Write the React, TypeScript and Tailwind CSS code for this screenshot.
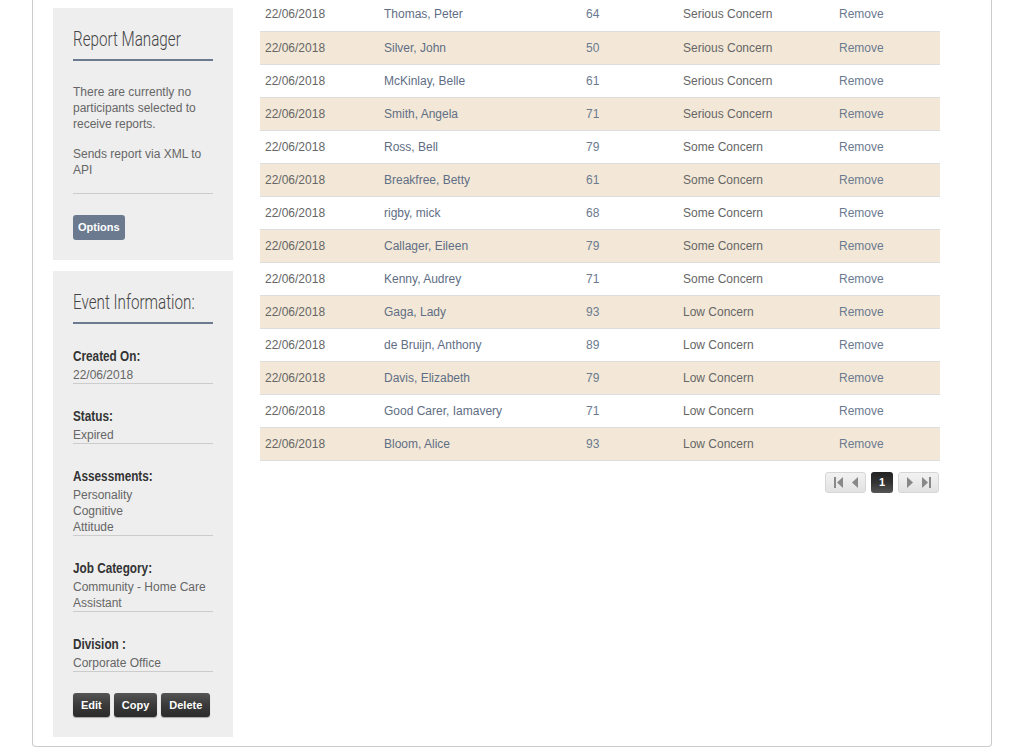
import React from 'react';

const rows = [
  { name: 'Thomas, Peter', score: 64, concern: 'Serious Concern' },
  { name: 'Silver, John', score: 50, concern: 'Serious Concern' },
  { name: 'McKinlay, Belle', score: 61, concern: 'Serious Concern' },
  { name: 'Smith, Angela', score: 71, concern: 'Serious Concern' },
  { name: 'Ross, Bell', score: 79, concern: 'Some Concern' },
  { name: 'Breakfree, Betty', score: 61, concern: 'Some Concern' },
  { name: 'rigby, mick', score: 68, concern: 'Some Concern' },
  { name: 'Callager, Eileen', score: 79, concern: 'Some Concern' },
  { name: 'Kenny, Audrey', score: 71, concern: 'Some Concern' },
  { name: 'Gaga, Lady', score: 93, concern: 'Low Concern' },
  { name: 'de Bruijn, Anthony', score: 89, concern: 'Low Concern' },
  { name: 'Davis, Elizabeth', score: 79, concern: 'Low Concern' },
  { name: 'Good Carer, Iamavery', score: 71, concern: 'Low Concern' },
  { name: 'Bloom, Alice', score: 93, concern: 'Low Concern' },
];

function PanelTitle({ children }: { children: React.ReactNode }) {
  return (
    <h2 className="h-[24px] whitespace-nowrap">
      <span className="inline-block origin-left scale-x-[0.76] font-['Roboto',sans-serif] font-light text-[20px] leading-[24px] text-[#444]">
        {children}
      </span>
    </h2>
  );
}

function InfoItem({ label, values }: { label: string; values: string[] }) {
  return (
    <div className="mt-[20px]">
      <div className="h-[18px] whitespace-nowrap">
        <span className="inline-block origin-left scale-x-[0.84] font-bold text-[14px] leading-[18px] text-[#333]">{label}</span>
      </div>
      <div className="border-b border-[#cccccc] mt-[5px]">
        {values.map((v) => (
          <div key={v} className="text-[12px] leading-[16px] text-[#666]">{v}</div>
        ))}
      </div>
    </div>
  );
}

function DarkButton({ children }: { children: React.ReactNode }) {
  return (
    <button className="h-[24px] px-[8px] rounded-[3px] bg-gradient-to-b from-[#555] via-[#3a3a3a] to-[#2a2a2a] text-white font-bold text-[11px] shadow-[0_1px_1px_rgba(0,0,0,0.3)]">
      {children}
    </button>
  );
}

export default function App() {
  return (
    <div className="w-[1036px] h-[755px] overflow-hidden bg-white font-['Liberation_Sans',Arial,sans-serif]">
      <div className="ml-[32px] w-[960px] border-x border-b border-[#cccccc] rounded-b-[4px] flex pl-[20px] pr-[51px] pb-[9px] pt-[8px]">
        {/* Sidebar */}
        <div className="w-[180px] shrink-0">
          <div className="bg-[#eeeeee] px-[20px] pt-[19px] h-[252px]">
            <PanelTitle>Report Manager</PanelTitle>
            <div className="h-[2px] bg-[#6b7a8f] mt-[8px]" />
            <p className="mt-[23px] text-[12px] leading-[16px] text-[#666]">
              There are currently no participants selected to receive reports.
            </p>
            <p className="mt-[14px] text-[12px] leading-[16px] text-[#666]">Sends report via XML to API</p>
            <div className="h-px bg-[#cccccc] mt-[15px]" />
            <button className="mt-[21px] h-[25px] px-[5px] rounded-[3px] bg-[#6b7a8f] text-white font-bold text-[11px]">
              Options
            </button>
          </div>
          <div className="bg-[#eeeeee] px-[20px] pt-[19px] mt-[11px] h-[466px]">
            <PanelTitle>Event Information:</PanelTitle>
            <div className="h-[2px] bg-[#6b7a8f] mt-[8px]" />
            <div className="mt-[2px]">
              <InfoItem label="Created On:" values={['22/06/2018']} />
              <InfoItem label="Status:" values={['Expired']} />
              <InfoItem label="Assessments:" values={['Personality', 'Cognitive', 'Attitude']} />
              <InfoItem label="Job Category:" values={['Community - Home Care', 'Assistant']} />
              <InfoItem label="Division :" values={['Corporate Office']} />
            </div>
            <div className="flex gap-[4px] mt-[21px]">
              <DarkButton>Edit</DarkButton>
              <DarkButton>Copy</DarkButton>
              <DarkButton>Delete</DarkButton>
            </div>
          </div>
        </div>

        {/* Table */}
        <div className="ml-[27px] flex-1 -mt-[10px]">
          <table className="w-full border-collapse text-[12px]">
            <tbody>
              {rows.map((r, i) => (
                <tr key={r.name} className={`h-[33px] border-b border-[#dddddd] ${i % 2 === 1 ? 'bg-[#f3e8d7]' : 'bg-white'}`}>
                  <td className="pl-[5px] w-[124px] text-[#666]">22/06/2018</td>
                  <td className="w-[202px] text-[#5f6e85]">{r.name}</td>
                  <td className="w-[97px] text-[#6b7a8f]">{r.score}</td>
                  <td className="w-[156px] text-[#666]">{r.concern}</td>
                  <td className="text-[#6b7a8f]">Remove</td>
                </tr>
              ))}
            </tbody>
          </table>
          <div className="flex justify-end gap-[5px] mt-[11px] mr-[1px]">
            <div className="w-[41px] flex items-center justify-center gap-[7px] h-[21px] rounded-[3px] border border-[#d6d6d6] bg-gradient-to-b from-[#f2f2f2] to-[#e2e2e2]">
              <svg width="10" height="11" viewBox="0 0 10 11"><rect x="0" y="0" width="2" height="11" fill="#888" /><path d="M9 0 L3 5.5 L9 11 Z" fill="#888" /></svg>
              <svg width="7" height="11" viewBox="0 0 7 11"><path d="M7 0 L1 5.5 L7 11 Z" fill="#888" /></svg>
            </div>
            <div className="w-[22px] h-[21px] rounded-[3px] bg-gradient-to-b from-[#222] via-[#333] to-[#555] text-white font-bold text-[11px] flex items-center justify-center">
              1
            </div>
            <div className="w-[41px] flex items-center justify-center gap-[7px] h-[21px] rounded-[3px] border border-[#d6d6d6] bg-gradient-to-b from-[#f2f2f2] to-[#e2e2e2]">
              <svg width="7" height="11" viewBox="0 0 7 11"><path d="M0 0 L6 5.5 L0 11 Z" fill="#888" /></svg>
              <svg width="10" height="11" viewBox="0 0 10 11"><path d="M1 0 L7 5.5 L1 11 Z" fill="#888" /><rect x="8" y="0" width="2" height="11" fill="#888" /></svg>
            </div>
          </div>
        </div>
      </div>
    </div>
  );
}
